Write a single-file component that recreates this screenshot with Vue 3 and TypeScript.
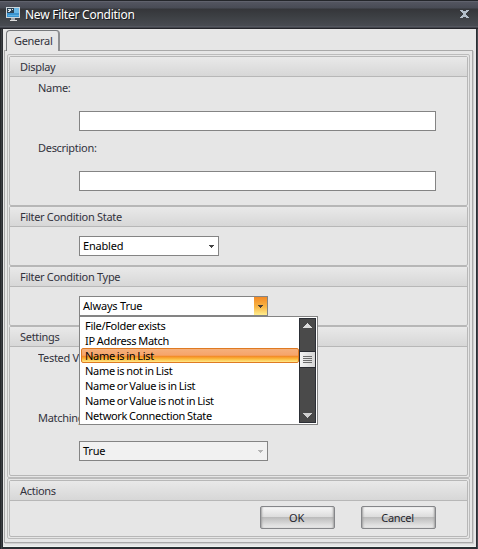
<script setup lang="ts">
import { ref } from 'vue'

const name = ref('')
const description = ref('')
const conditionTypes: string[] = [
  'File/Folder exists',
  'IP Address Match',
  'Name is in List',
  'Name is not in List',
  'Name or Value is in List',
  'Name or Value is not in List',
  'Network Connection State',
]
const highlighted = ref(2)
</script>

<template>
  <div class="window">
    <header class="titlebar">
      <svg class="app-icon" width="15" height="15" viewBox="0 0 15 15" shape-rendering="crispEdges">
        <path d="M0 0h14v11H0z" fill="#ccd5db" />
        <path d="M1 1h12v9H1z" fill="#3a93cf" />
        <path d="M7 1h6v5H7z" fill="#6bb8e6" />
        <path d="M1 1h7v5H1z" fill="#2d4354" />
        <path d="M2 2h3v1H2zM3 3h2v1H3zM2 4h2v1H2zM6 2h1v1H6z" fill="#d8e2e8" />
        <path d="M2 8h11v1H2z" fill="#5cb2e2" />
        <path d="M5 11h4v2H5z" fill="#a5a9ad" />
        <path d="M4 13h7v1H4z" fill="#dedede" />
      </svg>
      <h1 class="title">New Filter Condition</h1>
      <svg class="close" width="9" height="8" viewBox="0 0 9 8" shape-rendering="crispEdges">
        <path
          d="M0 0h3v1h3v-1h3v1h-1v1h-1v1h-1v2h1v1h1v1h1v1h-3v-1h-3v1h-3v-1h1v-1h1v-1h1v-2h-1v-1h-1v-1h-1z"
          fill="#b4bfca"
        />
      </svg>
    </header>

    <main class="client">
      <nav class="tabs"><div class="tab">General</div></nav>
      <div class="page">
        <div class="frame main-frame">
          <section class="group display">
            <h2 class="head">Display</h2>
            <div class="body">
              <label class="label">Name:</label>
              <input v-model="name" class="input" type="text" />
              <label class="label second">Description:</label>
              <input v-model="description" class="input" type="text" />
            </div>
          </section>
          <section class="group state">
            <h2 class="head">Filter Condition State</h2>
            <div class="body">
              <div class="select short">
                <span>Enabled</span>
                <svg class="arrow" width="5" height="3" viewBox="0 0 5 3" shape-rendering="crispEdges">
                  <path d="M0 0h5v1h-1v1h-1v1h-1v-1h-1v-1h-1z" fill="#444" />
                </svg>
              </div>
            </div>
          </section>
          <section class="group type">
            <h2 class="head">Filter Condition Type</h2>
            <div class="body">
              <div class="select open">
                <span>Always True</span>
                <div class="hot">
                  <svg width="5" height="3" viewBox="0 0 5 3" shape-rendering="crispEdges">
                    <path d="M0 0h5v1h-1v1h-1v1h-1v-1h-1v-1h-1z" fill="#463c36" />
                  </svg>
                </div>
                <div class="popup">
                  <ul class="options">
                    <li
                      v-for="(item, i) in conditionTypes"
                      :key="item"
                      class="option"
                      :class="{ active: i === highlighted }"
                      @mouseenter="highlighted = i"
                    >
                      {{ item }}
                    </li>
                  </ul>
                  <div class="scrollbar">
                    <svg width="9" height="5" viewBox="0 0 9 5" shape-rendering="crispEdges">
                      <path d="M4 0h1v1h1v1h1v1h1v1h1v1h-9v-1h1v-1h1v-1h1v-1h1z" fill="#dcdcdc" />
                    </svg>
                    <div class="thumb"><i></i><i></i><i></i><i></i></div>
                    <svg class="down" width="9" height="5" viewBox="0 0 9 5" shape-rendering="crispEdges">
                      <path d="M0 0h9v1h-1v1h-1v1h-1v1h-1v1h-1v-1h-1v-1h-1v-1h-1v-1h-1z" fill="#d0d0d0" />
                    </svg>
                  </div>
                </div>
              </div>
            </div>
          </section>
          <section class="group settings">
            <h2 class="head">Settings</h2>
            <div class="body">
              <label class="label clipped">Tested V</label>
              <label class="label clipped matching">Matching</label>
              <div class="select disabled">
                <span>True</span>
                <svg class="arrow" width="5" height="3" viewBox="0 0 5 3" shape-rendering="crispEdges">
                  <path d="M0 0h5v1h-1v1h-1v1h-1v-1h-1v-1h-1z" fill="#b4b4b4" />
                </svg>
              </div>
            </div>
          </section>
        </div>
        <div class="frame action-frame">
          <section class="group actions">
            <h2 class="head">Actions</h2>
            <div class="buttons">
              <button class="button" type="button">OK</button>
              <button class="button" type="button">Cancel</button>
            </div>
          </section>
        </div>
      </div>
    </main>
  </div>
</template>

<style>
body {
  margin: 0;
  overflow: hidden;
}
</style>

<style scoped>
.window,
.window * {
  box-sizing: border-box;
}
.window {
  display: flex;
  flex-direction: column;
  width: 478px;
  height: 549px;
  padding: 0 2px 3px 3px;
  background: linear-gradient(90deg, #26282b 0 1px, #3b3f43 1px 2px, #2b2e32 2px 476px, #2b2d34 476px 477px, #45494e 477px);
  color: #32323c;
  font: 11px/14px 'Noto Sans', 'Open Sans', sans-serif;
  letter-spacing: -0.3px;
}
.titlebar {
  display: flex;
  flex: none;
  height: 29px;
  margin: 0 -2px 0 -3px;
  padding: 7px 9px 0 6px;
  background: linear-gradient(
    #24262b 0 1px,
    #60626d 1px 2px,
    #535560 2px,
    #484b55 8px,
    #35363a 9px,
    #3c3f43 16px,
    #484b52 26px,
    #60636c 27px,
    #24252b 28px
  );
}
.app-icon {
  flex: none;
}
.title {
  flex: 1;
  margin: 0 0 0 4px;
  color: #fff;
  font-size: 12px;
  font-weight: 400;
  line-height: 16px;
  letter-spacing: -0.25px;
  text-shadow: 1px 1px 0 #17181b;
  white-space: nowrap;
}
.close {
  flex: none;
  margin-top: 3px;
}
.client {
  display: flex;
  flex: 1;
  flex-direction: column;
  padding: 1px 3px 3px 1px;
  background: #e6e6e6;
  border-bottom: 1px solid #edf3ef;
}
.tabs {
  display: flex;
  height: 21px;
  padding-left: 2px;
}
.tab {
  z-index: 1;
  width: 54px;
  height: 21px;
  padding: 3px 0 0 7px;
  background: #e6e6e6;
  border: 1px solid #77797c;
  border-bottom: 0;
  border-right: 2px solid #8f9092;
  border-radius: 4px 4px 0 0;
}
.page {
  flex: 1;
  margin-top: -1px;
  padding: 3px 2px;
  border: 1px solid #a9a9a9;
  box-shadow: 1px 1px 0 #cfcfcf;
}
.frame {
  padding: 1px;
  border: 1px solid #bcbcbc;
  border-radius: 2px;
}
.main-frame {
  height: 424px;
}
.action-frame {
  height: 61px;
}
.group {
  border: 1px solid #b7b7b7;
  border-radius: 2px;
  box-shadow: inset 0 1px 0 #efefef;
}
.display {
  height: 150px;
}
.state,
.type {
  height: 60px;
}
.settings {
  height: 150px;
}
.actions {
  height: 57px;
}
.head {
  height: 20px;
  margin: 0;
  padding: 3px 0 0 10px;
  background: linear-gradient(#e9e9e9, #d7d7d7);
  border-bottom: 1px solid #b7b7b7;
  font-size: 11px;
  font-weight: 400;
  line-height: 14px;
}
.body {
  display: flex;
  flex-direction: column;
  align-items: flex-start;
  padding-left: 69px;
}
.label {
  height: 14px;
  margin: 4px 0 0 -41px;
  white-space: nowrap;
}
.input {
  width: 357px;
  height: 20px;
  margin: 16px 0 0;
  padding: 0 3px;
  border: 1px solid #848484;
  border-radius: 0;
  outline: 0;
  background: #fff;
  font: inherit;
}
.label.second {
  margin-top: 10px;
}
.label.clipped {
  width: 41px;
  overflow: hidden;
}
.select {
  position: relative;
  display: flex;
  align-items: center;
  justify-content: space-between;
  width: 189px;
  height: 20px;
  padding: 0 4px 0 3px;
  border: 1px solid #848484;
  background: #fff;
  color: #000;
}
.short {
  width: 140px;
  margin-top: 9px;
}
.short span,
.open > span,
.disabled span {
  margin-top: -1px;
  letter-spacing: -0.2px;
}
.open {
  margin-top: 9px;
  padding-right: 0;
}
.disabled {
  margin-top: 16px;
  background: #f1f1f1;
}
.hot {
  display: flex;
  align-items: center;
  justify-content: center;
  width: 13px;
  height: 18px;
  background: linear-gradient(#f38a24, #f8b646 55%, #ffee8e);
}
.popup {
  position: absolute;
  z-index: 5;
  top: 19px;
  left: -1px;
  display: flex;
  width: 239px;
  height: 109px;
  padding: 1px;
  border: 1px solid #848484;
  background: #fff;
}
.options {
  flex: 1;
  margin: 0;
  padding: 0;
  list-style: none;
  word-spacing: -0.6px;
}
.option {
  height: 15px;
  padding: 1px 0 0 4px;
  line-height: 14px;
  white-space: nowrap;
}
.option.active {
  padding: 0 0 0 3px;
  border: 1px solid #df7a22;
  border-radius: 2px;
  background: linear-gradient(#f5b07c, #f6a46a 48%, #f38a26 56%, #fbb83c 76%, #ffe98a);
}
.scrollbar {
  display: flex;
  flex-direction: column;
  align-items: center;
  width: 17px;
  padding: 4px 0 4px;
  border: 1px solid #2c2f36;
  background: #4a4a4a;
}
.thumb {
  display: flex;
  flex-direction: column;
  align-items: center;
  width: 17px;
  height: 17px;
  margin-top: 23px;
  padding-top: 4px;
  border: 1px solid #292b31;
  background: linear-gradient(90deg, #f3f3f3, #d5d5d5);
}
.thumb i {
  width: 9px;
  height: 1px;
  margin-bottom: 1px;
  background: #6c6c6c;
}
.down {
  margin-top: auto;
}
.label.matching {
  margin-top: 46px;
}
.buttons {
  display: flex;
  gap: 26px;
  padding: 5px 0 0 250px;
}
.button {
  width: 75px;
  height: 23px;
  padding: 0 2px 0 0;
  border: 1px solid #858689;
  border-radius: 2px;
  background: linear-gradient(#f7f7f7, #dddddd 46%, #bcbcbc 50%, #dfdfdf 85%, #e9e9e9);
  box-shadow: inset 2px 0 2px -1px #a0a0a0, inset -2px 0 2px -1px #a0a0a0;
  color: #26262e;
  font: inherit;
  letter-spacing: inherit;
}
</style>
